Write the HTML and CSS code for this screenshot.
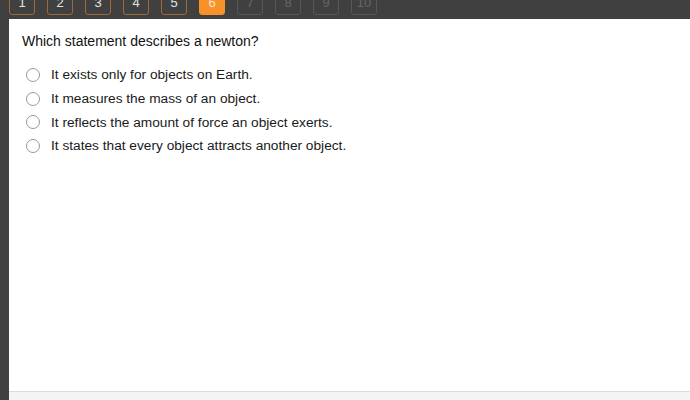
FILE: index.html
```html
<!DOCTYPE html>
<html lang="en">
<head>
    <meta charset="utf-8">
    <title>Question 6</title>
    <link rel="stylesheet" href="styles.css">
</head>
<body>
    <nav class="pager">
        <span class="page done">1</span>
        <span class="page done">2</span>
        <span class="page done">3</span>
        <span class="page done">4</span>
        <span class="page done">5</span>
        <span class="page current">6</span>
        <span class="page todo">7</span>
        <span class="page todo">8</span>
        <span class="page todo">9</span>
        <span class="page todo">10</span>
    </nav>
    <div id="main">
        <div class="question">
            <p class="prompt">Which statement describes a newton?</p>
            <ul class="choices">
                <li><span class="radio"></span>It exists only for objects on Earth.</li>
                <li><span class="radio"></span>It measures the mass of an object.</li>
                <li><span class="radio"></span>It reflects the amount of force an object exerts.</li>
                <li><span class="radio"></span>It states that every object attracts another object.</li>
            </ul>
        </div>
        <div class="footer"></div>
    </div>
</body>
</html>
```

FILE: styles.css
```css
/* Font */
body {font-family: "Liberation Sans", Arial, sans-serif; margin: 0; background: #404040; height: 400px; overflow: hidden}

/* Pager */
.pager {height: 19px; display: flex; align-items: flex-end; gap: 12px; padding: 0 0 4px 9px; overflow: hidden; box-sizing: border-box}
.page {flex: none; width: 26px; height: 28px; border: 1px solid #9a6a3a; border-radius: 3px; display: flex; align-items: flex-end; justify-content: center; padding-bottom: 5px; box-sizing: border-box; color: #e2e2e2; font-size: 13px; line-height: 1}
.page.current {background: #f7922a; border-color: #f7922a; color: #fde3c6}
.page.todo {border-color: #575757; color: #666}

/* Question panel */
#main {margin-left: 9px; background: #fff; height: 381px; display: flex; flex-direction: column}
.question {flex: 1; padding: 14px 0 0 13px}
.prompt {margin: 0 0 14px; font-size: 14px; color: #111}
.choices {list-style: none; margin: 0; padding: 0 0 0 4px}
.choices li {display: flex; align-items: center; height: 23.7px; font-size: 13.7px; color: #1a1a1a}
.radio {width: 12px; height: 12px; border: 1px solid #999; border-radius: 50%; margin-right: 11px; flex: none}
.footer {height: 8px; border-top: 1px solid #dcdcdc; background: #f4f4f4}
```
